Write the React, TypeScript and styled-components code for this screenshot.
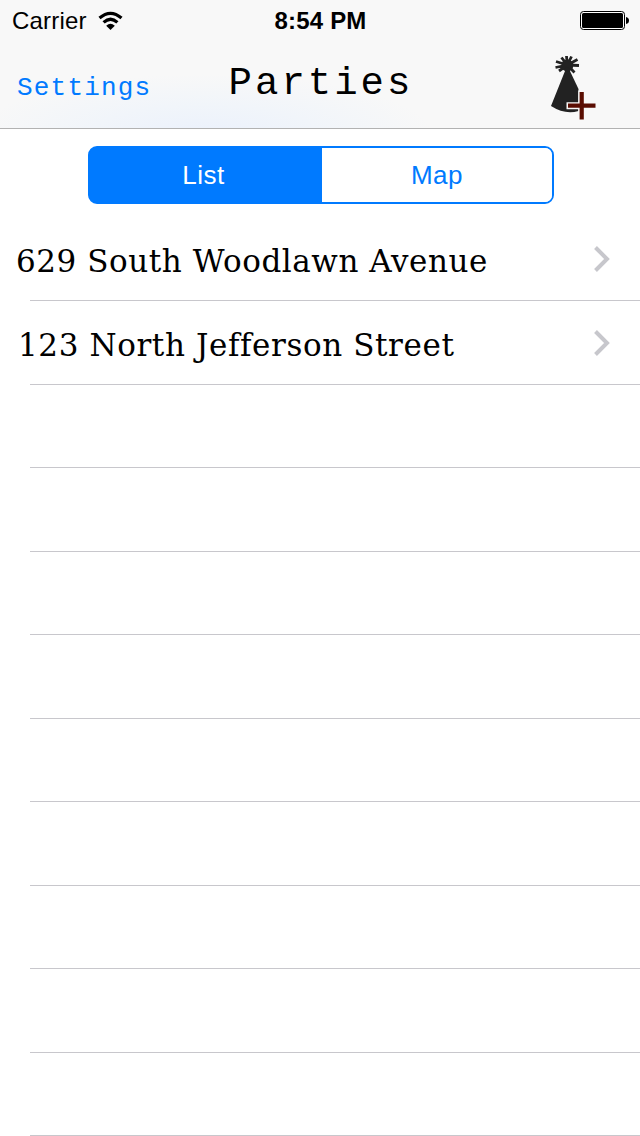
import React from 'react';
import styled, { createGlobalStyle } from 'styled-components';

const GlobalStyle = createGlobalStyle`
  * { box-sizing: border-box; }
  html, body { margin: 0; background: #fff; }
`;

const Screen = styled.main`
  width: 640px;
  height: 1136px;
  overflow: hidden;
  background: #fff;
  color: #000;
  font-family: "Liberation Sans", Arial, sans-serif;
`;

const Header = styled.header`
  height: 129px;
  border-bottom: 1px solid #b2b2b2;
  background: radial-gradient(ellipse 230px 62px at 205px 136px, #ebf1fc 0%, #f1f5fa 50%, #f8f8f8 100%);
`;

const StatusBar = styled.div`
  height: 40px;
  padding: 0 11px 0 12px;
  display: grid;
  grid-template-columns: 1fr auto 1fr;
  align-items: center;
  font-size: 24px;
  line-height: 40px;
`;

const Carrier = styled.div`
  display: flex;
  align-items: center;
  gap: 11px;
  padding-top: 1px;
  letter-spacing: 0.2px;
`;

const Time = styled.div`
  padding-top: 1px;
  font-weight: 700;
  font-size: 24px;
  letter-spacing: 0.2px;
`;

const BatterySlot = styled.div`
  display: flex;
  justify-content: flex-end;
`;

const NavBar = styled.nav`
  height: 88px;
  padding: 0 17px;
  display: grid;
  grid-template-columns: 1fr auto 1fr;
  align-items: center;
  font-family: "Liberation Mono", "Courier New", monospace;
`;

const SettingsLink = styled.a`
  padding-top: 8px;
  color: #007aff;
  font-size: 26px;
  letter-spacing: 1.2px;
`;

const Title = styled.h1`
  margin: 0;
  padding-left: 2px;
  font-weight: 400;
  font-size: 39px;
  letter-spacing: 3px;
`;

const AddParty = styled.div`
  display: flex;
  justify-content: flex-end;
  padding-right: 26px;
`;

const Segments = styled.div`
  display: flex;
  width: 466px;
  height: 58px;
  margin: 17px 0 13px 88px;
  border: 2px solid #007aff;
  border-radius: 9px;
  background: linear-gradient(to right, #007aff 50%, #fff 50%);
  overflow: hidden;
`;

const Segment = styled.div<{ $active?: boolean }>`
  width: ${p => (p.$active ? 232 : 230)}px;
  padding-right: ${p => (p.$active ? 5 : 0)}px;
  line-height: 54px;
  text-align: center;
  font-size: 26px;
  letter-spacing: 0.5px;
  background: ${p => (p.$active ? '#007aff' : '#fff')};
  color: ${p => (p.$active ? '#fff' : '#007aff')};
`;

const List = styled.ul`
  list-style: none;
  margin: 0;
  padding: 0 0 0 30px;
`;

const Row = styled.li<{ $height: number }>`
  height: ${p => p.$height}px;
  border-bottom: 1px solid #c8c7cc;
  display: flex;
  align-items: center;
  justify-content: space-between;
  padding: 0 29px 0 0;
`;

const Address = styled.span<{ $indent: number; $spacing: number }>`
  margin-left: ${p => p.$indent}px;
  padding-top: 5px;
  font-family: "DejaVu Serif", serif;
  font-size: 31px;
  letter-spacing: ${p => p.$spacing}px;
  white-space: nowrap;
`;

const Wifi = () => (
  <svg width="26" height="20" viewBox="0 0 26 20" fill="none" stroke="#000" strokeWidth="3.2">
    <path d="M1.500 7Q12.500 -2.400 23.500 7" />
    <path d="M5.600 11.400Q12.500 5 19.400 11.400" />
    <path d="M8.200 14.800Q12.500 10.800 16.800 14.800L12.500 19Z" fill="#000" stroke="none" />
  </svg>
);

const Battery = () => (
  <svg width="49" height="19" viewBox="0 0 49 19">
    <rect x="0.5" y="0.5" width="44" height="18" rx="3" fill="#fff" stroke="#000" />
    <rect x="2" y="2" width="41" height="15" rx="1.5" />
    <path d="M46 6Q49 6.5 49 9.5T46 13Z" />
  </svg>
);

const HatPlus = () => (
  <svg width="48" height="72" viewBox="0 -1 48 72">
    <path d="M16.800 20H20L29.500 40V62Q16 66 2 57Z" fill="#222" />
    <circle cx="18.300" cy="16.500" r="6" fill="#222" />
    <path
      d="M18.300 16L17.500 7M18.300 16L12.500 8.500M18.300 16L22.500 7.500M18.300 16L28.500 10.500M18.300 16L30 16.500M18.300 16L25.500 23.500M18.300 16L10 22M18.300 16L6.500 18.500M18.300 16L7 12.500"
      stroke="#222"
      strokeWidth="2.800"
    />
    <path d="M32.700 41.500V71M17.500 56.700H47" stroke="#f8f8f8" strokeWidth="7" />
    <path d="M32.700 43V70.500M19 56.700H46.500" stroke="#5a0d02" strokeWidth="4.200" />
  </svg>
);

const Chevron = () => (
  <svg width="18" height="28" viewBox="0 0 18 28" fill="none" stroke="#c7c7cc" strokeWidth="4">
    <path d="M2.500 2.500L14 14L2.500 25.500" />
  </svg>
);

const rows = [
  { address: '629 South Woodlawn Avenue', height: 84, indent: -14, spacing: 0.55 },
  { address: '123 North Jefferson Street', height: 84, indent: -12, spacing: 0.6 },
  ...[83, 84, 83, 84, 83, 84, 83, 84, 83].map(height => ({ address: '', height, indent: 0, spacing: 0 })),
];

export default function App() {
  return (
    <Screen>
      <GlobalStyle />
      <Header>
        <StatusBar>
          <Carrier>Carrier <Wifi /></Carrier>
          <Time>8:54 PM</Time>
          <BatterySlot><Battery /></BatterySlot>
        </StatusBar>
        <NavBar>
          <SettingsLink>Settings</SettingsLink>
          <Title>Parties</Title>
          <AddParty><HatPlus /></AddParty>
        </NavBar>
      </Header>
      <Segments>
        <Segment $active>List</Segment>
        <Segment>Map</Segment>
      </Segments>
      <List>
        {rows.map((row, i) => (
          <Row key={i} $height={row.height}>
            {row.address && (
              <>
                <Address $indent={row.indent} $spacing={row.spacing}>{row.address}</Address>
                <Chevron />
              </>
            )}
          </Row>
        ))}
      </List>
    </Screen>
  );
}
